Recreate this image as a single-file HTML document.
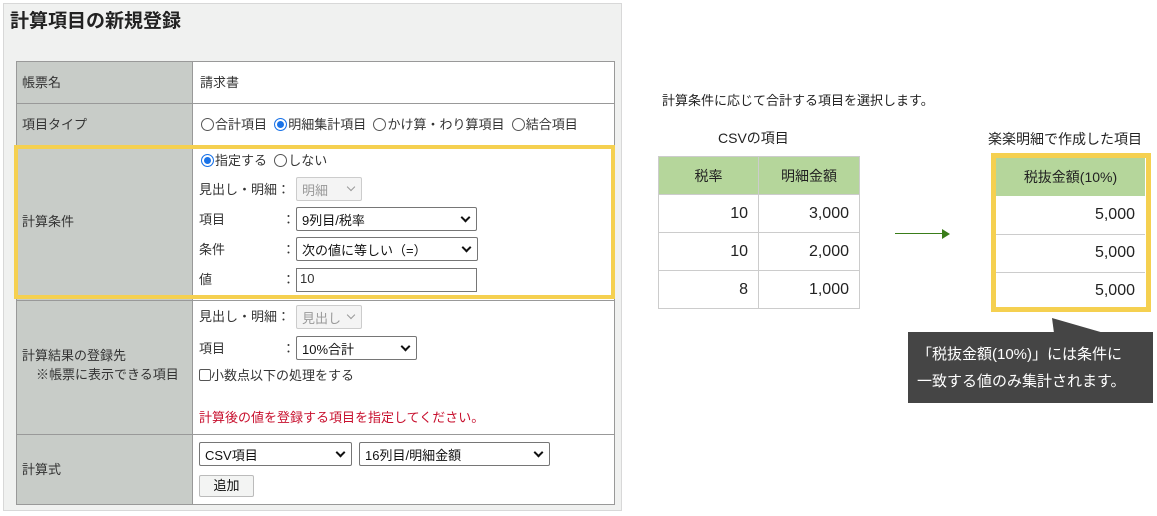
<!DOCTYPE html><html><head><meta charset="utf-8"><style>
*{margin:0;padding:0;box-sizing:border-box}
body{width:1157px;height:516px;background:#fff;font-family:"Liberation Sans","Noto Sans CJK JP",sans-serif;font-size:13px;color:#333;position:relative;overflow:hidden}
.a{position:absolute;white-space:nowrap}
.panel{left:3px;top:3px;width:619px;height:508px;background:#f0f1f0;border:1px solid #d8d8d8}
.lab{background:#c8ccc8}
.sel{position:absolute;background:#fff;border:1px solid #767676;border-radius:2px;height:24px;padding:2px 5px;font-size:13px;color:#111}
.sel:after{content:"";position:absolute;right:7px;top:6px;width:5px;height:5px;border-right:2px solid #111;border-bottom:2px solid #111;transform:rotate(45deg)}
.dis{background:#f4f4f4;border-color:#ccc;color:#999}
.dis:after{border-color:#999;border-width:1px}
.r{display:inline-block;width:13px;height:13px;border:1px solid #555;border-radius:50%;vertical-align:-2px;margin-right:1px;background:#fff}
.r.on{border:1px solid #1a73e8;box-shadow:inset 0 0 0 2px #fff;background:#1a73e8}
td{border:1px solid #ccc;height:38px;font-size:16px;text-align:right;padding-right:10px;color:#222}
th{background:#b5d69b;font-weight:normal;font-size:14px;height:38px;color:#222}
</style></head><body>
<div class="a panel"></div>
<div class="a" style="left:10px;top:6px;font-size:19px;font-weight:bold;color:#222">計算項目の新規登録</div>
<div class="a" style="left:16px;top:61px;width:599px;height:444px;border:1px solid #999;background:#fff"></div>
<div class="a lab" style="left:17px;top:62px;width:176px;height:442px;border-right:1px solid #999"></div>
<div class="a" style="left:16px;top:103px;width:599px;height:1px;background:#999"></div>
<div class="a" style="left:16px;top:300px;width:599px;height:1px;background:#999"></div>
<div class="a" style="left:16px;top:434px;width:599px;height:1px;background:#999"></div>
<div class="a" style="left:22px;top:72px">帳票名</div>
<div class="a" style="left:200px;top:72px">請求書</div>
<div class="a" style="left:22px;top:114px">項目タイプ</div>
<div class="a" style="left:201px;top:114px"><span class="r"></span>合計項目 &nbsp;<span class="r on"></span>明細集計項目 &nbsp;<span class="r"></span>かけ算・わり算項目 &nbsp;<span class="r"></span>結合項目</div>
<div class="a" style="left:22px;top:211px">計算条件</div>
<div class="a" style="left:201px;top:150px"><span class="r on"></span>指定する &nbsp;<span class="r"></span>しない</div>
<div class="a" style="left:199px;top:179px">見出し・明細：</div>
<div class="sel dis" style="left:296px;top:177px;width:66px;">明細</div>
<div class="a" style="left:199px;top:209px">項目</div><div class="a" style="left:282px;top:209px">：</div>
<div class="sel" style="left:296px;top:207px;width:181px">9列目/税率</div>
<div class="a" style="left:199px;top:239px">条件</div><div class="a" style="left:282px;top:239px">：</div>
<div class="sel" style="left:296px;top:237px;width:182px">次の値に等しい（=）</div>
<div class="a" style="left:199px;top:269px">値</div><div class="a" style="left:282px;top:269px">：</div>
<div class="a" style="left:296px;top:268px;width:181px;height:24px;border:1px solid #767676;background:#fff;padding:2px 3px">10</div>
<div class="a" style="left:14px;top:145px;width:601px;height:154px;border:4px solid #f5d050"></div>
<div class="a" style="left:22px;top:345px">計算結果の登録先</div>
<div class="a" style="left:36px;top:364px">※帳票に表示できる項目</div>
<div class="a" style="left:199px;top:306px">見出し・明細：</div>
<div class="sel dis" style="left:296px;top:305px;width:66px;">見出し</div>
<div class="a" style="left:199px;top:338px">項目</div><div class="a" style="left:282px;top:338px">：</div>
<div class="sel" style="left:296px;top:336px;width:121px">10%合計</div>
<div class="a" style="left:199px;top:365px"><span style="display:inline-block;width:12px;height:12px;border:1px solid #555;border-radius:2px;vertical-align:-1px;background:#fff"></span>小数点以下の処理をする</div>
<div class="a" style="left:199px;top:407px;color:#c8102e">計算後の値を登録する項目を指定してください。</div>
<div class="a" style="left:22px;top:459px">計算式</div>
<div class="sel" style="left:199px;top:442px;width:153px">CSV項目</div>
<div class="sel" style="left:359px;top:442px;width:191px">16列目/明細金額</div>
<div class="a" style="left:199px;top:475px;width:55px;height:22px;border:1px solid #bbb;border-radius:2px;background:#f3f4f3;text-align:center;line-height:20px;color:#111">追加</div>
<div class="a" style="left:662px;top:90px;font-size:13px;color:#222">計算条件に応じて合計する項目を選択します。</div>
<div class="a" style="left:718px;top:128px;font-size:14px;color:#222">CSVの項目</div>
<table class="a" style="left:658px;top:156px;width:202px;border-collapse:collapse;border:1px solid #ccc">
<tr><th style="width:100px;border-right:1px solid #ccc">税率</th><th>明細金額</th></tr>
<tr><td>10</td><td>3,000</td></tr><tr><td>10</td><td>2,000</td></tr><tr><td>8</td><td>1,000</td></tr></table>
<div class="a" style="left:895px;top:233px;width:48px;height:1px;background:#3a7d1a"></div>
<div class="a" style="left:942px;top:229px;border-left:8px solid #3a7d1a;border-top:5px solid transparent;border-bottom:5px solid transparent;width:0;height:0"></div>
<div class="a" style="left:988px;top:129px;font-size:14px;color:#222">楽楽明細で作成した項目</div>
<div class="a" style="left:991px;top:153px;width:160px;height:159px;border:5px solid #f5d050;background:#fff"></div>
<table class="a" style="left:996px;top:158px;width:149px;border-collapse:collapse">
<tr><th>税抜金額(10%)</th></tr><tr><td style="border-left:0;border-right:0;border-top:0">5,000</td></tr><tr><td style="border-left:0;border-right:0">5,000</td></tr><tr><td style="border:0">5,000</td></tr></table>
<svg class="a" style="left:1040px;top:316px" width="70" height="18"><polygon points="12,2 14,17 64,17" fill="#454545"/></svg>
<div class="a" style="left:908px;top:332px;width:245px;height:71px;background:#454545;color:#fff;font-size:15px;line-height:27px;padding:9px 0 0 9px">「税抜金額(10%)」には条件に<br>一致する値のみ集計されます。</div>
</body></html>
